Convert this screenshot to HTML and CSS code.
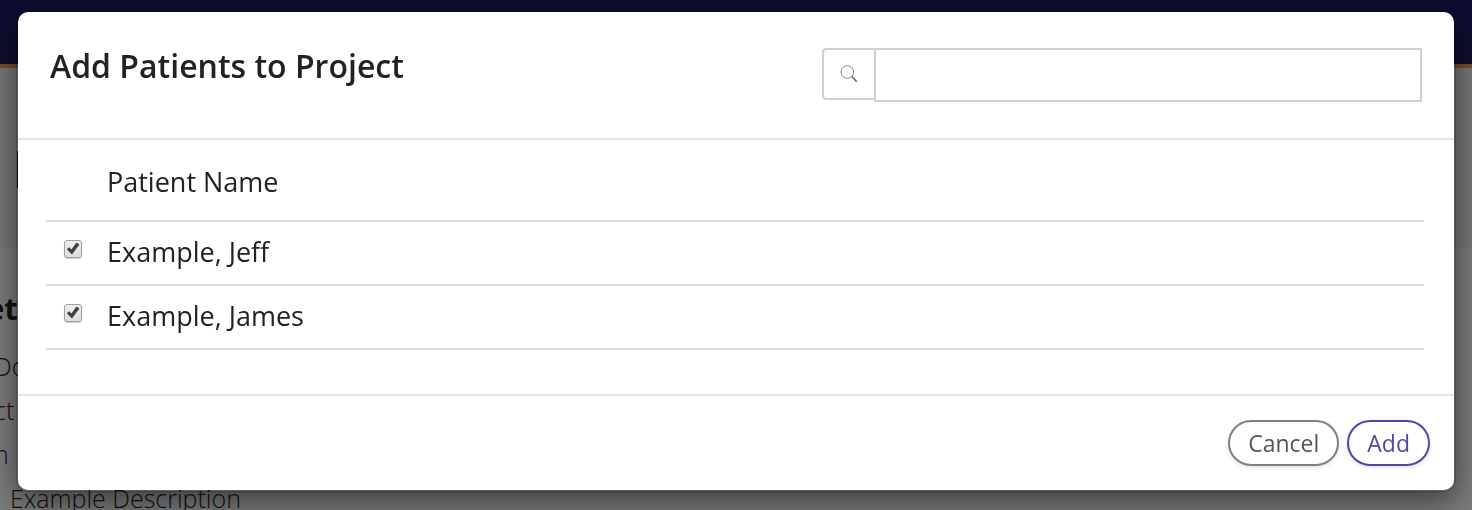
FILE: index.html
```html
<!DOCTYPE html>
<html lang="en">
<head>
    <meta charset="UTF-8">
    <meta name="viewport" content="width=device-width, initial-scale=1.0">
    <title>Add Patients to Project</title>
    <link rel="stylesheet" href="styles.css">
</head>
<body>
    <!-- Page behind the modal -->
    <div class="page" aria-hidden="true">
        <div class="navbar"></div>
        <div class="banner"><span class="banner-mark"></span></div>
        <div class="details">
            <h2>et</h2>
            <ul>
                <li>Do</li>
                <li>ct</li>
                <li>n</li>
            </ul>
            <p>Example Description</p>
        </div>
    </div>

    <!-- Modal -->
    <div class="overlay">
        <form class="modal" role="dialog" aria-labelledby="modalTitle">
            <div class="modal-header">
                <h1 id="modalTitle">Add Patients to Project</h1>
                <div class="search">
                    <label class="search-icon" for="search" aria-label="Search">
                        <svg width="18" height="18" viewBox="0 0 18 18" fill="none" stroke="#6f6466">
                            <circle cx="7.3" cy="7" r="6.3" stroke-width="0.8"/>
                            <path d="M11.8 11.5L16.8 16.8" stroke-width="1.6"/>
                        </svg>
                    </label>
                    <input type="text" id="search">
                </div>
            </div>

            <div class="modal-body">
                <table>
                    <thead>
                        <tr>
                            <td></td>
                            <th>Patient Name</th>
                        </tr>
                    </thead>
                    <tbody>
                        <tr>
                            <td>
                                <span class="check">
                                    <input type="checkbox" id="jeff" checked>
                                    <svg viewBox="0 0 18 18"><path d="M2.8 9.2L5.2 7.3L7.4 9.4L12.6 2.4L15.4 4.4L8 14.4Z" fill="#404040"/></svg>
                                </span>
                            </td>
                            <td><label for="jeff">Example, Jeff</label></td>
                        </tr>
                        <tr>
                            <td>
                                <span class="check">
                                    <input type="checkbox" id="james" checked>
                                    <svg viewBox="0 0 18 18"><path d="M2.8 9.2L5.2 7.3L7.4 9.4L12.6 2.4L15.4 4.4L8 14.4Z" fill="#404040"/></svg>
                                </span>
                            </td>
                            <td><label for="james">Example, James</label></td>
                        </tr>
                    </tbody>
                </table>
            </div>

            <div class="modal-footer">
                <button type="button" class="btn">Cancel</button>
                <button type="submit" class="btn btn-primary">Add</button>
            </div>
        </form>
    </div>
</body>
</html>
```

FILE: styles.css
```css
* {
    box-sizing: border-box;
}

body {
    margin: 0;
    font-family: "Open Sans", "Noto Sans", sans-serif;
    color: #222;
    overflow: hidden;
}

/* Page behind the modal */
.page {
    height: 100vh;
    overflow: hidden;
    background: #f8f8f8;
}

.navbar {
    height: 68px;
    background: #1c1a60;
    border-bottom: 4px solid #f09a54;
}

.banner {
    height: 180px;
    padding: 83px 17px 0;
    background: #eee;
}

.banner-mark {
    display: block;
    width: 4px;
    height: 37px;
    background: #222;
}

.details {
    padding-top: 40px;
    font-size: 25px;
    font-weight: 300;
    white-space: nowrap;
}

.details h2 {
    margin: 0 0 16px -14px;
    font-size: 31px;
    font-weight: 700;
    line-height: 40px;
}

.details ul {
    margin: 0 0 0 -6px;
    padding: 0;
    list-style: none;
}

.details li {
    line-height: 44px;
}

.details p {
    margin: 0 10px;
    line-height: 44px;
}

/* Dark background overlay */
.overlay {
    position: fixed;
    top: 0;
    left: 0;
    width: 100%;
    height: 100%;
    padding: 10px 16px;
    background: rgba(0, 0, 0, 0.5);
}

.modal {
    background: #fff;
    background-clip: padding-box;
    border: 2px solid rgba(0, 0, 0, 0.2);
    border-radius: 12px;
    box-shadow: 0 10px 30px rgba(0, 0, 0, 0.5);
}

.modal-header {
    display: flex;
    justify-content: space-between;
    align-items: flex-start;
    padding: 36px 32px;
    border-bottom: 2px solid #e5e5e5;
}

.modal-header h1 {
    margin: 0;
    font-size: 32px;
    font-weight: 600;
    line-height: 36px;
}

/* Search box */
.search {
    display: flex;
    align-items: flex-start;
    width: calc((100% + 68px) * 5 / 12);
}

.search-icon {
    display: flex;
    align-items: center;
    justify-content: center;
    width: 52px;
    height: 52px;
    border: 2px solid #d0d0d0;
    border-right: 0;
    border-radius: 4px 0 0 4px;
}

.search input {
    flex: 1;
    min-width: 0;
    height: 54px;
    padding: 0 16px;
    border: 2px solid #d0d0d0;
    font: inherit;
    font-size: 24px;
}

/* Patient table */
.modal-body {
    padding: 0 30px 44px 28px;
}

table {
    width: 100%;
    border-collapse: separate;
    border-spacing: 0;
    font-size: 27px;
    line-height: 36px;
}

th,
td {
    padding: 12px 0 14px;
    border-bottom: 2px solid #ddd;
    font-weight: 400;
    text-align: left;
    vertical-align: top;
}

thead th,
thead td {
    padding: 24px 0 20px;
}

td:first-child {
    width: 61px;
    padding-left: 18px;
}

.check {
    display: grid;
    width: 18px;
    margin-top: 6px;
}

.check input,
.check svg {
    grid-area: 1 / 1;
    width: 18px;
    height: 18px;
    margin: 0;
}

.check input {
    appearance: none;
    border: 1px solid #a0a0a0;
    border-radius: 3px;
    background: linear-gradient(#eee, #dcdcdc);
    box-shadow: 0 1px 1px rgba(0, 0, 0, 0.2);
}

.check svg {
    pointer-events: none;
}

.modal-footer {
    display: flex;
    justify-content: flex-end;
    gap: 8px;
    padding: 24px;
    border-top: 2px solid #e5e5e5;
}

.btn {
    height: 46px;
    padding: 0 18px;
    background: #fff;
    border: 2px solid #808080;
    border-radius: 23px;
    box-shadow: 0 2px 4px rgba(0, 0, 0, 0.1);
    font: inherit;
    font-size: 23px;
    color: #555;
    cursor: pointer;
}

.btn-primary {
    border-color: #4b49a8;
    color: #4b49a8;
}
```
